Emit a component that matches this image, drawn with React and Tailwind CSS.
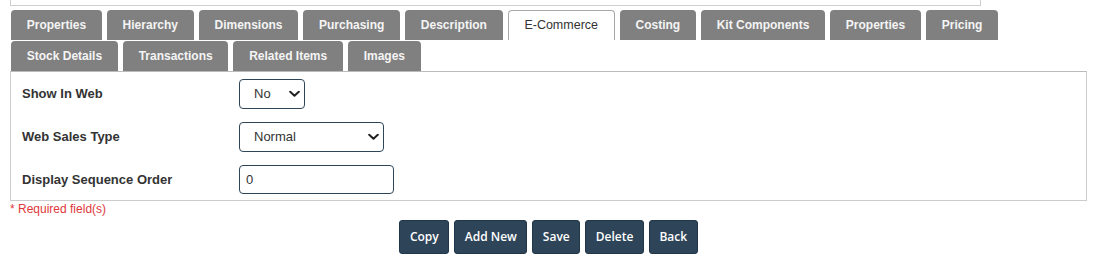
import React from "react";

const row1 = ["Properties", "Hierarchy", "Dimensions", "Purchasing", "Description", "E-Commerce", "Costing", "Kit Components", "Properties", "Pricing"];
const row2 = ["Stock Details", "Transactions", "Related Items", "Images"];

function Tab({ label }) {
  const active = label === "E-Commerce";
  if (active) {
    return (
      <div className="h-[30px] px-[15.75px] flex items-center bg-white border border-b-0 border-[#a8a8a8] rounded-t-[4px] text-[12.5px] text-[#333]">
        {label}
      </div>
    );
  }
  return (
    <div className="h-[30px] px-[15.75px] flex items-center bg-[#808080] rounded-t-[4px] text-[12px] font-bold text-[#f4f4f4]">
      {label}
    </div>
  );
}

function Chevron() {
  return (
    <svg className="pointer-events-none absolute right-[5px] top-1/2 -translate-y-1/2" width="11" height="7" viewBox="0 0 11 7">
      <path d="M1.2 1.2 L5.5 5.3 L9.8 1.2" fill="none" stroke="#222" strokeWidth="2" strokeLinecap="round" strokeLinejoin="round" />
    </svg>
  );
}

function Select({ value, options, width }) {
  return (
    <div className={"relative " + width}>
      <select
        defaultValue={value}
        className="appearance-none w-full h-[30px] pl-[14px] pr-[20px] border border-[#2f4659] rounded-[4px] bg-white text-[13px] text-[#333] outline-none"
      >
        {options.map((o) => (
          <option key={o}>{o}</option>
        ))}
      </select>
      <Chevron />
    </div>
  );
}

function Row({ label, children }) {
  return (
    <div className="flex items-center">
      <div className="w-[228px] pl-[11px] text-[13px] font-bold text-[#333]">{label}</div>
      {children}
    </div>
  );
}

const buttons = ["Copy", "Add New", "Save", "Delete", "Back"];

export default function App() {
  return (
    <div className="w-[1097px] h-[266px] bg-white overflow-hidden px-[10px]" style={{ fontFamily: '"Liberation Sans", Arial, sans-serif' }}>
      <div className="w-[971px] h-[6px] border border-t-0 border-[#cfcfcf]" />
      <div className="mt-[4px] pl-[1px] flex flex-wrap gap-x-[5px] gap-y-[1px]">
        {row1.map((t, i) => (
          <Tab key={"a" + i} label={t} />
        ))}
        {row2.map((t, i) => (
          <Tab key={"b" + i} label={t} />
        ))}
      </div>
      <div className="border border-[#cccccc] border-t-[#bbbbbb] pt-[7px] pb-[6px] flex flex-col gap-[13px]">
        <Row label="Show In Web">
          <Select value="No" options={["No", "Yes"]} width="w-[66px]" />
        </Row>
        <Row label="Web Sales Type">
          <Select value="Normal" options={["Normal"]} width="w-[145px]" />
        </Row>
        <Row label="Display Sequence Order">
          <input
            defaultValue="0"
            className="w-[155px] h-[29px] px-[6px] border border-[#2f4659] rounded-[4px] text-[13px] text-[#333] outline-none"
          />
        </Row>
      </div>
      <div className="text-[12px] leading-[15px] mt-[1px] text-[#e0383b]">* Required field(s)</div>
      <div className="mt-[3px] flex justify-center gap-[5px]" style={{ fontFamily: '"Open Sans", sans-serif' }}>
        {buttons.map((b) => (
          <button
            key={b}
            className="h-[34px] px-[9.5px] bg-[#2e4458] border border-[#22364a] rounded-[3px] text-white text-[12px] font-semibold"
          >
            {b}
          </button>
        ))}
      </div>
    </div>
  );
}
